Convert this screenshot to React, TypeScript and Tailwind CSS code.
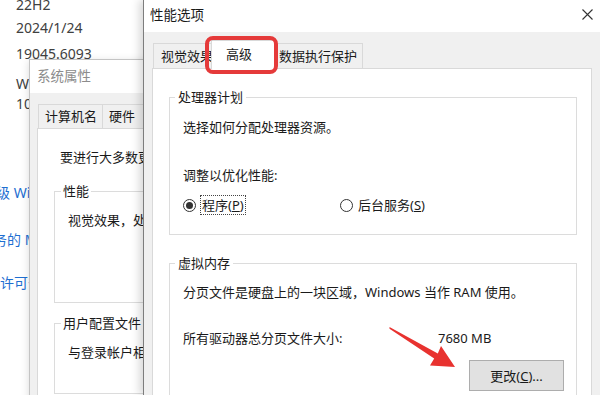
import type { ReactNode } from 'react'

function GroupBox({ title, className, children }: { title: string; className?: string; children: ReactNode }) {
  return (
    <fieldset className={`border border-[#dcdcdc] ${className ?? ''}`}>
      <legend className="ml-[5px] px-[3px] leading-[18px]">{title}</legend>
      {children}
    </fieldset>
  )
}

function Radio({ checked }: { checked?: boolean }) {
  return (
    <span className="w-[13px] h-[13px] rounded-full border border-[#333] bg-white flex items-center justify-center shrink-0">
      {checked && <span className="w-[7px] h-[7px] rounded-full bg-[#333]" />}
    </span>
  )
}

export default function App() {
  return (
    <div className="relative w-[600px] h-[395px] overflow-hidden bg-white font-['Noto_Sans','Noto_Sans_CJK_SC',sans-serif] text-[13px] text-[#1a1a1a]">
      {/* settings page behind the dialogs */}
      <div className="pl-[16px] text-[14px] leading-[20px] text-[#404040] whitespace-nowrap">
        <p className="-mt-[5px]">22H2</p>
        <p className="mt-[3px]">2024/1/24</p>
        <p className="mt-[6px]">19045.6093</p>
        <p className="mt-[10px]">Windows Feature Experience Pack</p>
        <p>1000.19061.1000.0</p>
        <div className="text-[#1f6fd1]">
          <p className="mt-[69px] -ml-[20px]">级 Windows</p>
          <p className="mt-[27px] -ml-[23px]">务的 Microsoft 服务协议</p>
          <p className="mt-[23px] -ml-[16px]">许可条款</p>
        </div>
      </div>

      {/* 系统属性 */}
      <div className="absolute left-[29px] top-[59px] w-[140px] h-[345px] border border-[#c4c4c4] bg-[#f0f0f0] shadow-[0_2px_8px_rgba(0,0,0,0.15)] flex flex-col overflow-hidden whitespace-nowrap">
        <div className="h-[33px] shrink-0 bg-white pl-[7px] flex items-center text-[13.5px] text-[#8c8c8c]">系统属性</div>
        <div className="flex-1 flex flex-col pl-[7px] pt-[11px]">
          <div className="flex h-[24px] ml-[1px]">
            <div className="w-[65px] border border-b-0 border-[#d9d9d9] pl-[6px] leading-[23px]">计算机名</div>
            <div className="w-[50px] border border-b-0 border-l-0 border-[#d9d9d9] pl-[6px] leading-[23px]">硬件</div>
          </div>
          <div className="flex-1 bg-white border border-[#d9d9d9]">
            <p className="mt-[19px] pl-[22px] leading-[18px]">要进行大多数更改，你必须作为管理员登录。</p>
            <fieldset className="mt-[16px] ml-[16px] h-[121px] border border-[#dcdcdc]">
              <legend className="ml-[6px] px-[2px] leading-[18px]">性能</legend>
              <p className="mt-[11px] pl-[13px] leading-[18px]">视觉效果，处理器计划，内存使用，以及虚拟内存</p>
            </fieldset>
            <fieldset className="mt-[11px] ml-[16px] h-[80px] border border-[#dcdcdc]">
              <legend className="ml-[6px] px-[2px] leading-[18px]">用户配置文件</legend>
              <p className="mt-[11px] pl-[13px] leading-[18px]">与登录帐户相关的桌面设置</p>
            </fieldset>
          </div>
        </div>
      </div>

      {/* 性能选项 */}
      <div className="absolute left-[143px] top-0 w-[457px] h-[395px] bg-[#f0f0f0] border-l border-[#7d7d7d] shadow-[-4px_0_8px_rgba(0,0,0,0.15)] flex flex-col whitespace-nowrap">
        <div className="h-[32px] shrink-0 bg-white flex items-center justify-between pl-[6px] pr-[7px]">
          <span className="text-[13.5px] leading-[18px] -mt-[2px]">性能选项</span>
          <svg width="11" height="11" viewBox="0 0 11 11" className="-mt-[3px]">
            <path d="M0.5 0.5L10.5 10.5M10.5 0.5L0.5 10.5" stroke="#333" strokeWidth="1.1" fill="none" />
          </svg>
        </div>
        <div className="flex-1 flex flex-col pl-[8px] pr-[8px] pt-[8px]">
          <div className="flex items-end h-[28px]">
            <div className="ml-[1px] w-[60px] h-[25px] border border-b-0 border-[#d9d9d9] pl-[7px] leading-[24px] overflow-hidden">视觉效果</div>
            <div className="-ml-[2px] w-[64px] h-[29px] -mb-[1px] bg-white border border-b-0 border-[#d9d9d9] pl-[14px] leading-[27px] relative z-10">高级</div>
            <div className="w-[88px] h-[25px] border border-b-0 border-l-0 border-[#d9d9d9] pl-[4px] leading-[24px]">数据执行保护</div>
          </div>
          <div className="flex-1 bg-white border border-[#d9d9d9] pl-[16px] pr-[14px]">
            <GroupBox title="处理器计划" className="mt-[19px]">
              <div className="px-[13px] pb-[19px]">
                <p className="mt-[12px] leading-[18px]">选择如何分配处理器资源。</p>
                <p className="mt-[30px] leading-[18px]">调整以优化性能:</p>
                <div className="mt-[11px] flex items-center h-[20px]">
                  <div className="w-[157px] flex items-center gap-[4px]">
                    <Radio checked />
                    <span className="border border-dotted border-[#444] px-[1px] leading-[18px]">
                      程序(<span className="underline">P</span>)
                    </span>
                  </div>
                  <div className="flex items-center gap-[5px]">
                    <Radio />
                    <span className="leading-[18px]">
                      后台服务(<span className="underline">S</span>)
                    </span>
                  </div>
                </div>
              </div>
            </GroupBox>
            <GroupBox title="虚拟内存" className="mt-[19px]">
              <div className="pl-[13px] pr-[12px] pb-[10px]">
                <p className="mt-[11px] leading-[18px]">分页文件是硬盘上的一块区域，Windows 当作 RAM 使用。</p>
                <div className="mt-[28px] flex leading-[18px]">
                  <span className="w-[255px]">所有驱动器总分页文件大小:</span>
                  <span>7680 MB</span>
                </div>
                <div className="mt-[13px] flex justify-end">
                  <button className="w-[95px] h-[31px] border border-[#adadad] bg-[#e1e1e1] leading-[18px]">
                    更改(<span className="underline">C</span>)...
                  </button>
                </div>
              </div>
            </GroupBox>
          </div>
        </div>
      </div>

      {/* annotation: red box around the 高级 tab */}
      <div className="absolute left-[205px] top-[36px] w-[73px] h-[38px] border-[4px] border-[#e53a3a] rounded-[8px] z-20" />

      {/* annotation: red arrow toward the button */}
      <svg className="absolute inset-0 z-20 pointer-events-none" width="600" height="395" viewBox="0 0 600 395">
        <polygon
          points="389.5,327 437.8,353.4 441,346 455,367 430,365.5 434.2,358.6 389.5,328.8"
          fill="#e8322f"
        />
      </svg>
    </div>
  )
}
